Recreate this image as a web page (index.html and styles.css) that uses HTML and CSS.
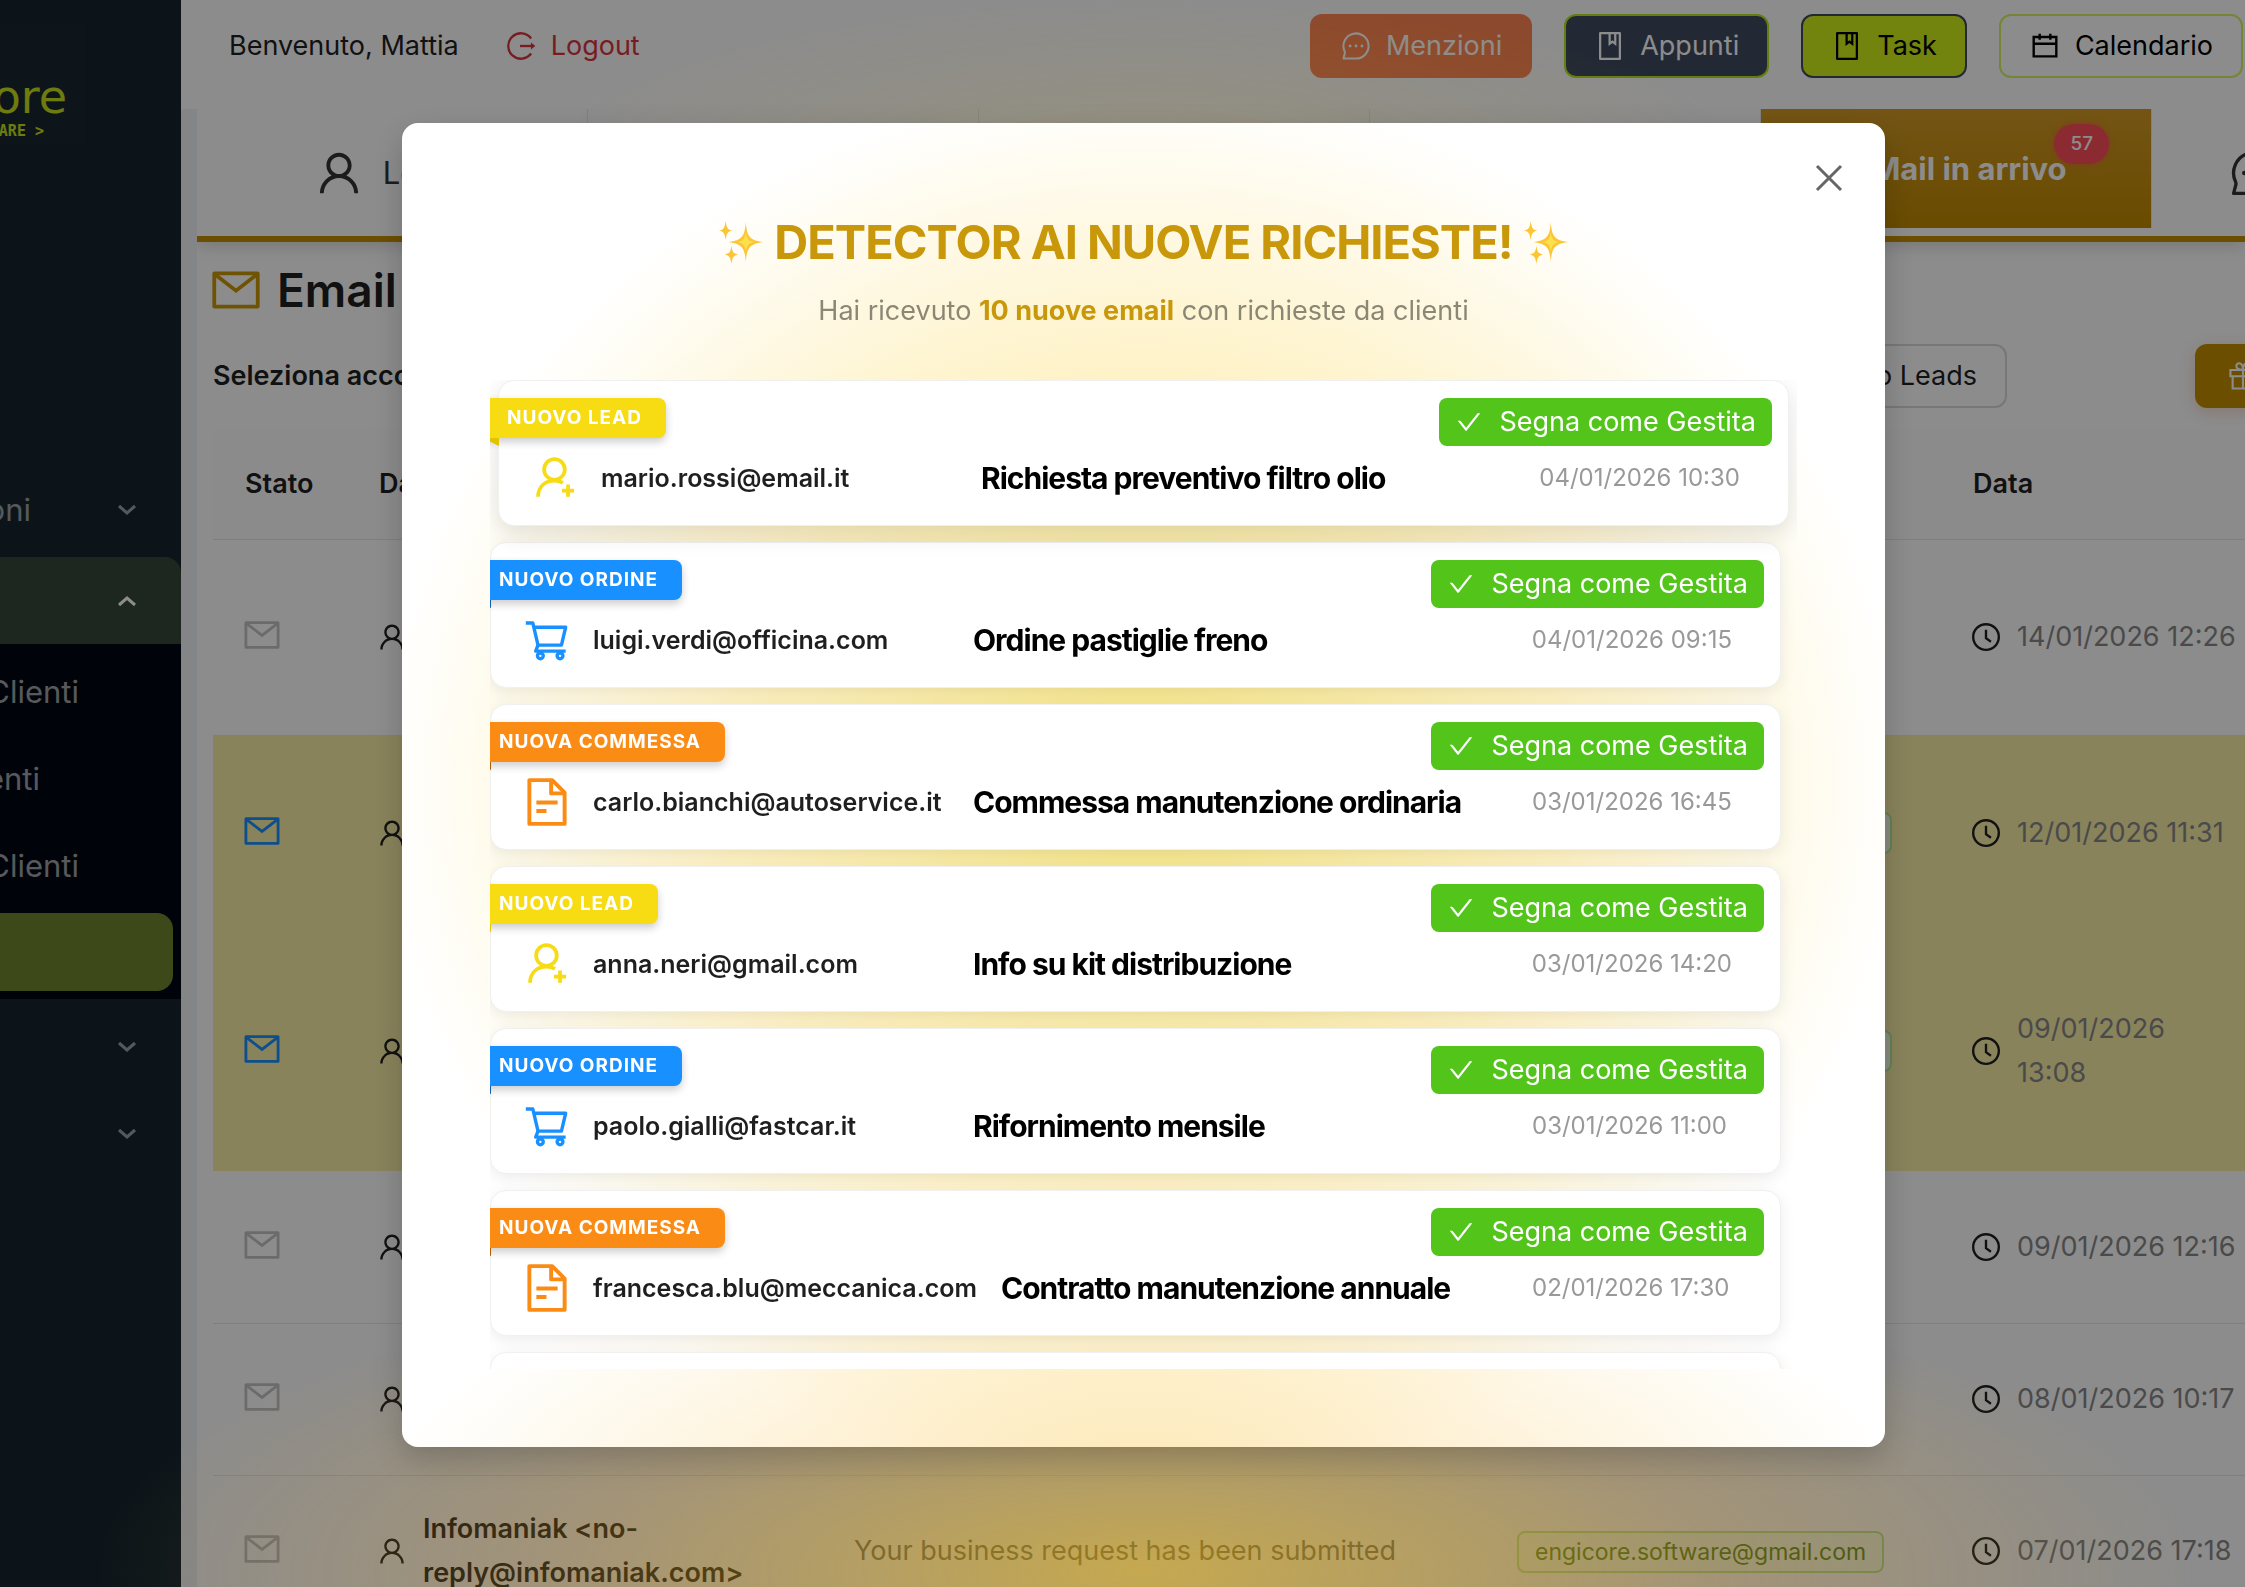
FILE: index.html
```html
<!DOCTYPE html>
<html lang="it">
<head>
    <meta charset="UTF-8">
    <meta name="viewport" content="width=device-width, initial-scale=1.0">
    <title>Engicore - Email</title>
    <link rel="stylesheet" href="styles.css">
</head>
<body>
    <svg class="sprite" aria-hidden="true">
        <symbol id="i-user" viewBox="0 0 1024 1024"><path fill="currentColor" d="M858.500 763.600a374 374 0 0 0-80.600-119.500 375.630 375.630 0 0 0-119.500-80.600c-.4-.2-.8-.3-1.200-.5C719.500 518 760 444.700 760 362c0-137-111-248-248-248S264 225 264 362c0 82.700 40.500 156 102.800 201.100-.4.200-.8.300-1.200.5-44.800 18.900-85 46-119.500 80.600a375.630 375.630 0 0 0-80.600 119.500A371.700 371.700 0 0 0 136 901.800a8 8 0 0 0 8 8.200h60c4.400 0 7.900-3.500 8-7.800 2-77.200 33-149.500 87.800-204.300 56.700-56.700 132-87.900 212.200-87.900s155.500 31.200 212.200 87.900C779 752.700 810 825 812 902.200c.1 4.400 3.600 7.800 8 7.800h60a8 8 0 0 0 8-8.200c-1-47.800-10.900-94.300-29.500-138.200zM512 534c-45.900 0-89.100-17.900-121.600-50.400S340 407.900 340 362c0-45.900 17.900-89.100 50.400-121.600S466.100 190 512 190s89.100 17.900 121.600 50.400S684 316.100 684 362c0 45.900-17.900 89.100-50.400 121.600S557.900 534 512 534z"/></symbol>
        <symbol id="i-mail" viewBox="0 0 1024 1024"><g fill="none" stroke="currentColor" stroke-width="72"><rect x="100" y="196" width="824" height="632" rx="4"/><path d="M128 228l384 296 384-296"/></g></symbol>
        <symbol id="i-clock" viewBox="0 0 1024 1024"><g fill="none" stroke="currentColor" stroke-width="76"><circle cx="512" cy="512" r="410"/><path d="M512 280v270l158 112"/></g></symbol>
        <symbol id="i-check" viewBox="0 0 1024 1024"><path fill="currentColor" d="M912 190h-69.900c-9.800 0-19.100 4.500-25.100 12.200L404.700 724.500 207 474a32 32 0 0 0-25.100-12.200H112c-6.700 0-10.400 7.700-6.300 12.900l273.900 347c12.800 16.200 37.400 16.200 50.300 0l488.400-618.900c4.100-5.100.4-12.800-6.300-12.800z"/></symbol>
        <symbol id="i-logout" viewBox="0 0 1024 1024"><g fill="none" stroke="currentColor" stroke-width="76"><path d="M836 270A406 406 0 1 0 836 754"/><path d="M480 512h360"/></g><path fill="currentColor" d="M830 400l140 112-140 112z"/></symbol>
        <symbol id="i-message" viewBox="0 0 1024 1024"><path fill="none" stroke="currentColor" stroke-width="66" stroke-linejoin="round" d="M110 914h402a402 402 0 1 0-364-232c12 26 14 48 2 80z"/><g fill="currentColor"><circle cx="322" cy="512" r="46"/><circle cx="512" cy="512" r="46"/><circle cx="702" cy="512" r="46"/></g></symbol>
        <symbol id="i-book" viewBox="0 0 1024 1024"><g fill="none" stroke="currentColor" stroke-width="72"><rect x="196" y="100" width="632" height="824" rx="4"/><path d="M500 110v330l90-70 90 70V110"/></g></symbol>
        <symbol id="i-calendar" viewBox="0 0 1024 1024"><path fill="none" stroke="currentColor" stroke-width="76" d="M150 222h724v620H150zM150 440h724M342 120v190M682 120v190"/></symbol>
        <symbol id="i-gift" viewBox="0 0 1024 1024"><g fill="none" stroke="currentColor" stroke-width="68"><path d="M110 320h804v200H110zM180 520h664v390H180zM512 320v590"/><path d="M512 310C400 310 300 280 300 190c0-60 50-90 95-85 80 10 117 100 117 205zM512 310c112 0 212-30 212-120 0-60-50-90-95-85-80 10-117 100-117 205z"/></g></symbol>
        <symbol id="i-user-add" viewBox="0 0 1024 1024"><g fill="none" stroke="currentColor" stroke-width="80"><circle cx="500" cy="330" r="220"/><path d="M150 910c0-210 150-340 350-340 75 0 130 15 180 45"/><path d="M790 650v260M660 780h260"/></g></symbol>
        <symbol id="i-cart" viewBox="0 0 1024 1024"><g fill="none" stroke="currentColor" stroke-width="72" stroke-linejoin="round"><path d="M60 150h150l110 470h500l90-380H240"/><path d="M320 620l-50 130h640"/><circle cx="370" cy="850" r="62"/><circle cx="790" cy="850" r="62"/></g></symbol>
        <symbol id="i-file" viewBox="60 60 904 904"><g fill="none" stroke="currentColor" stroke-width="74" stroke-linejoin="round"><path d="M180 100h430l234 234v590H180z"/><path d="M590 110v240h240M312 520h400M312 680h190"/></g></symbol>
        <symbol id="i-down" viewBox="0 0 20 20"><path fill="none" stroke="currentColor" stroke-width="3" d="M2 6l8 7 8-7"/></symbol>
        <symbol id="i-up" viewBox="0 0 20 20"><path fill="none" stroke="currentColor" stroke-width="3" d="M2 14l8-7 8 7"/></symbol>
        <symbol id="i-close" viewBox="0 0 28 28"><path fill="none" stroke="currentColor" stroke-width="3" d="M2 2l24 24M26 2L2 26"/></symbol>
        <symbol id="i-sparkles" viewBox="0 0 48 48"><path fill="#fcc534" d="M29 3c1 15 4 19 18 21-14 2-17 6-18 21-1-15-4-19-18-21 14-2 17-6 18-21z"/><path fill="#fde04e" d="M29 14c1 7 3 9 9 10-6 1-8 3-9 10-1-7-3-9-9-10 6-1 8-3 9-10z"/><path fill="#fcc534" d="M8 2c1 7 2 9 7 10-5 1-6 3-7 10-1-7-2-9-7-10 5-1 6-3 7-10zM14 28c1 7 2 8 7 9-5 1-6 3-7 10-1-7-2-9-7-10 5-1 6-2 7-9z"/></symbol>
    </svg>

    <div class="layout">
        <aside class="sidebar">
            <div class="logo">
                <span class="logo-name">core</span>
                <span class="logo-tag">SOFTWARE &gt;</span>
            </div>
            <nav class="menu">
                <a href="#" class="menu-item"><span class="label">Comunicazioni</span><svg><use href="#i-down"/></svg></a>
                <a href="#" class="menu-item open" aria-label="Clienti"><svg><use href="#i-up"/></svg></a>
                <div class="submenu">
                    <a href="#" class="submenu-item">Clienti</a>
                    <a href="#" class="submenu-item short">Clienti</a>
                    <a href="#" class="submenu-item">Clienti</a>
                    <a href="#" class="submenu-item active" aria-label="Email"></a>
                </div>
                <a href="#" class="menu-item" aria-label="Magazzino"><svg><use href="#i-down"/></svg></a>
                <a href="#" class="menu-item" aria-label="Impostazioni"><svg><use href="#i-down"/></svg></a>
            </nav>
        </aside>

        <div class="main">
            <header class="header">
                <span class="welcome">Benvenuto, Mattia</span>
                <a href="#" class="logout"><svg><use href="#i-logout"/></svg>Logout</a>
                <div class="actions">
                    <button class="btn mentions"><svg><use href="#i-message"/></svg>Menzioni</button>
                    <button class="btn notes"><svg><use href="#i-book"/></svg>Appunti</button>
                    <button class="btn task"><svg><use href="#i-book"/></svg>Task</button>
                    <button class="btn calendar"><svg><use href="#i-calendar"/></svg>Calendario</button>
                </div>
            </header>

            <div class="content">
                <div class="tabs">
                    <button class="tab"><svg><use href="#i-user"/></svg>Leads</button>
                    <button class="tab"></button>
                    <button class="tab"></button>
                    <button class="tab"></button>
                    <button class="tab active">Mail in arrivo<span class="count">57</span></button>
                    <button class="tab last"><svg><use href="#i-message"/></svg></button>
                </div>

                <section class="panel">
                    <h1 class="page-title"><svg><use href="#i-mail"/></svg>Email</h1>
                    <div class="toolbar">
                        <span class="toolbar-label">Seleziona account:</span>
                        <button class="btn leads">Solo Leads</button>
                        <button class="btn gift" aria-label="Novità"><svg><use href="#i-gift"/></svg></button>
                    </div>

                    <table class="mails">
                        <colgroup>
                            <col class="col-state"><col class="col-from"><col class="col-subject"><col class="col-account"><col class="col-date">
                        </colgroup>
                        <thead>
                            <tr><th>Stato</th><th>Da</th><th></th><th></th><th>Data</th></tr>
                        </thead>
                        <tbody>
                            <tr class="tall">
                                <td><svg class="mail"><use href="#i-mail"/></svg></td>
                                <td><svg class="person"><use href="#i-user"/></svg></td>
                                <td></td><td></td>
                                <td><div class="date"><svg><use href="#i-clock"/></svg><span>14/01/2026 12:26</span></div></td>
                            </tr>
                            <tr class="tall unread">
                                <td><svg class="mail"><use href="#i-mail"/></svg></td>
                                <td><svg class="person"><use href="#i-user"/></svg></td>
                                <td></td><td><span class="tag wide"></span></td>
                                <td><div class="date"><svg><use href="#i-clock"/></svg><span>12/01/2026 11:31</span></div></td>
                            </tr>
                            <tr class="taller unread">
                                <td><svg class="mail"><use href="#i-mail"/></svg></td>
                                <td><svg class="person"><use href="#i-user"/></svg></td>
                                <td></td><td><span class="tag wide"></span></td>
                                <td><div class="date"><svg><use href="#i-clock"/></svg><span>09/01/2026<br>13:08</span></div></td>
                            </tr>
                            <tr>
                                <td><svg class="mail"><use href="#i-mail"/></svg></td>
                                <td><svg class="person"><use href="#i-user"/></svg></td>
                                <td></td><td></td>
                                <td><div class="date"><svg><use href="#i-clock"/></svg><span>09/01/2026 12:16</span></div></td>
                            </tr>
                            <tr>
                                <td><svg class="mail"><use href="#i-mail"/></svg></td>
                                <td><svg class="person"><use href="#i-user"/></svg></td>
                                <td></td><td></td>
                                <td><div class="date"><svg><use href="#i-clock"/></svg><span>08/01/2026 10:17</span></div></td>
                            </tr>
                            <tr>
                                <td><svg class="mail"><use href="#i-mail"/></svg></td>
                                <td><div class="from"><svg class="person"><use href="#i-user"/></svg><strong>Infomaniak &lt;no-<br>reply@infomaniak.com&gt;</strong></div></td>
                                <td class="subject-cell">Your business request has been submitted</td>
                                <td><span class="tag">engicore.software@gmail.com</span></td>
                                <td><div class="date"><svg><use href="#i-clock"/></svg><span>07/01/2026 17:18</span></div></td>
                            </tr>
                        </tbody>
                    </table>
                </section>
            </div>
        </div>
    </div>

    <div class="mask">
        <div class="modal" role="dialog" aria-labelledby="modalTitle">
            <button class="close" aria-label="Chiudi"><svg><use href="#i-close"/></svg></button>
            <h2 class="modal-title" id="modalTitle"><svg><use href="#i-sparkles"/></svg>DETECTOR AI NUOVE RICHIESTE!<svg><use href="#i-sparkles"/></svg></h2>
            <p class="modal-text">Hai ricevuto <strong>10 nuove email</strong> con richieste da clienti</p>

            <div class="requests">
                <article class="request lead hover">
                    <div class="request-top"><span class="ribbon">NUOVO LEAD</span><button class="done"><svg><use href="#i-check"/></svg>Segna come Gestita</button></div>
                    <div class="request-body"><svg><use href="#i-user-add"/></svg><span class="email">mario.rossi@email.it</span><h3>Richiesta preventivo filtro olio</h3><time>04/01/2026 10:30</time></div>
                </article>
                <article class="request order">
                    <div class="request-top"><span class="ribbon">NUOVO ORDINE</span><button class="done"><svg><use href="#i-check"/></svg>Segna come Gestita</button></div>
                    <div class="request-body"><svg><use href="#i-cart"/></svg><span class="email">luigi.verdi@officina.com</span><h3>Ordine pastiglie freno</h3><time>04/01/2026 09:15</time></div>
                </article>
                <article class="request job">
                    <div class="request-top"><span class="ribbon">NUOVA COMMESSA</span><button class="done"><svg><use href="#i-check"/></svg>Segna come Gestita</button></div>
                    <div class="request-body"><svg><use href="#i-file"/></svg><span class="email">carlo.bianchi@autoservice.it</span><h3>Commessa manutenzione ordinaria</h3><time>03/01/2026 16:45</time></div>
                </article>
                <article class="request lead">
                    <div class="request-top"><span class="ribbon">NUOVO LEAD</span><button class="done"><svg><use href="#i-check"/></svg>Segna come Gestita</button></div>
                    <div class="request-body"><svg><use href="#i-user-add"/></svg><span class="email">anna.neri@gmail.com</span><h3>Info su kit distribuzione</h3><time>03/01/2026 14:20</time></div>
                </article>
                <article class="request order">
                    <div class="request-top"><span class="ribbon">NUOVO ORDINE</span><button class="done"><svg><use href="#i-check"/></svg>Segna come Gestita</button></div>
                    <div class="request-body"><svg><use href="#i-cart"/></svg><span class="email">paolo.gialli@fastcar.it</span><h3>Rifornimento mensile</h3><time>03/01/2026 11:00</time></div>
                </article>
                <article class="request job">
                    <div class="request-top"><span class="ribbon">NUOVA COMMESSA</span><button class="done"><svg><use href="#i-check"/></svg>Segna come Gestita</button></div>
                    <div class="request-body"><svg><use href="#i-file"/></svg><span class="email">francesca.blu@meccanica.com</span><h3>Contratto manutenzione annuale</h3><time>02/01/2026 17:30</time></div>
                </article>
                <article class="request"></article>
            </div>
        </div>
    </div>
</body>
</html>
```

FILE: styles.css
```css
:root {
    --gold: #c9980a;
    --lead: #f7dc14;
    --order: #1890ff;
    --job: #fa8c16;
    --green: #52c41a;
    --text: #1f1f1f;
    --font-family: Inter, 'Liberation Sans', sans-serif;
}

* {
    margin: 0;
    padding: 0;
    box-sizing: border-box;
}

body {
    font-family: var(--font-family);
    font-size: 27px;
    line-height: 44px;
    color: var(--text);
    height: 100vh;
    overflow: hidden;
}

button {
    font: inherit;
    color: inherit;
    border: none;
    background: none;
    cursor: pointer;
}

a {
    text-decoration: none;
}

svg {
    display: block;
    flex: none;
}

.sprite {
    position: absolute;
    width: 0;
    height: 0;
}

.layout {
    display: flex;
    height: 100vh;
    overflow: hidden;
}

/* Sidebar */
.sidebar {
    flex: none;
    width: 181px;
    background: #16262f;
    overflow: hidden;
}

.logo {
    display: flex;
    flex-direction: column;
    align-items: flex-end;
    width: 86px;
    height: 120px;
    margin: 23px 0 323px;
    padding: 50px 19px 0 0;
    background: #1a2731;
    color: #c6e01c;
}

.logo-name {
    font-family: 'DejaVu Sans', sans-serif;
    font-size: 46px;
    font-weight: 400;
    line-height: 48px;
}

.logo-tag {
    margin-right: 23px;
    font-family: 'DejaVu Sans Mono', monospace;
    font-size: 15px;
    font-weight: 700;
    line-height: 20px;
    white-space: nowrap;
}

.menu-item {
    display: flex;
    align-items: center;
    justify-content: flex-end;
    height: 87px;
    padding-right: 44px;
    font-size: 31px;
    color: #9aa3a8;
}

.menu-item svg {
    width: 20px;
    height: 20px;
}

.menu-item .label {
    margin-right: 86px;
}

.menu-item.open {
    margin-top: 4px;
    background: #35453a;
    border-radius: 0 16px 0 0;
    color: #fff;
}

.submenu {
    margin-bottom: 4px;
    padding: 4px 0 8px;
    background: #000713;
}

.submenu-item {
    display: flex;
    align-items: center;
    justify-content: flex-end;
    height: 87px;
    padding-right: 102px;
    font-size: 31px;
    color: #a0a3a8;
}

.submenu-item.short {
    padding-right: 141px;
}

.submenu-item.active {
    height: 78px;
    margin: 4px 8px 0 0;
    background: #71852f;
    border-radius: 0 16px 16px 0;
}

/* Header */
.main {
    flex: 1;
    min-width: 0;
    background: #f0f2f5;
}

.header {
    display: flex;
    align-items: center;
    height: 109px;
    padding: 0 2px 17px 48px;
    background: #fff;
}

.logout {
    display: flex;
    align-items: center;
    gap: 14px;
    margin-left: 46px;
    color: #d9363e;
}

.logout svg,
.btn svg {
    width: 32px;
    height: 32px;
}

.actions {
    display: flex;
    gap: 32px;
    margin-left: auto;
}

.btn {
    display: flex;
    align-items: center;
    gap: 14px;
    height: 64px;
    padding: 0 28px;
    border: 2px solid transparent;
    border-radius: 12px;
}

.mentions {
    background: #ff8552;
    color: #fff;
}

.notes {
    background: #3e4b60;
    border-color: #b5e61d;
    color: #fff;
}

.task {
    background: #d0ee1a;
    border-color: #3e4b60;
    color: #000;
}

.calendar {
    border-color: #d3f261;
    color: #000;
}

/* Tabs */
.content {
    margin-left: 16px;
    overflow: hidden;
}

.tabs {
    display: flex;
    height: 133px;
    background: #fff;
    border-bottom: 6px solid #c48f00;
    box-shadow: 0 4px 16px rgba(0, 0, 0, 0.15);
    position: relative;
}

.tab {
    position: relative;
    display: flex;
    align-items: center;
    justify-content: center;
    gap: 18px;
    flex: 0 0 391px;
    border-right: 1px solid #ebebeb;
    font-size: 31px;
    color: #333;
}

.tab svg {
    width: 52px;
    height: 52px;
}

.tab.active {
    height: 119px;
    padding-left: 26px;
    background: linear-gradient(#d29a26, #c08a00);
    color: #fff;
    font-weight: 700;
}

.tab.last {
    justify-content: flex-start;
    padding-left: 76px;
}

.count {
    position: absolute;
    top: 15px;
    right: 42px;
    padding: 0 16px;
    background: #ff4d5a;
    border-radius: 20px;
    box-shadow: 0 0 6px rgba(255, 77, 79, 0.6);
    font-size: 19px;
    font-weight: 500;
    line-height: 40px;
}

/* Mail panel */
.panel {
    padding: 16px 0 0 16px;
    background: #fff;
}

.page-title {
    display: flex;
    align-items: center;
    gap: 14px;
    font-size: 46px;
    font-weight: 600;
    line-height: 64px;
}

.page-title svg {
    width: 54px;
    height: 54px;
    margin-left: -4px;
    color: #c9980a;
}

.toolbar {
    display: flex;
    align-items: center;
    height: 64px;
    margin: 22px 0 21px;
}

.toolbar-label {
    margin-right: auto;
    font-weight: 600;
}

.leads {
    margin-right: 188px;
    border-color: #d9d9d9;
}

.gift {
    width: 112px;
    margin-right: -62px;
    padding-left: 30px;
    background: #c48f00;
    box-shadow: 0 4px 16px rgba(196, 60, 0, 0.2);
    color: #fff;
}

.mails {
    width: calc(100% + 40px);
    table-layout: fixed;
    border-collapse: collapse;
}

.col-state { width: 134px; }
.col-from { width: 475px; }
.col-subject { width: 663px; }
.col-account { width: 456px; }

.mails th {
    height: 110px;
    padding: 0 32px;
    background: #fdfdfd;
    border-bottom: 1px solid #e8e8e8;
    font-weight: 600;
    text-align: left;
}

.mails td {
    height: 152px;
    padding: 0 32px;
    border-bottom: 1px solid #e8e8e8;
    vertical-align: middle;
    white-space: nowrap;
}

.mails .tall td { height: 196px; }
.mails .taller td { height: 240px; }

.mails .unread td {
    background: #f9eea7;
    border-bottom: none;
}

.mail {
    width: 40px;
    height: 40px;
    margin: 0 0 4px -3px;
    color: #c4c4c4;
}

.unread .mail {
    color: #1890ff;
}

.person,
.date svg {
    width: 32px;
    height: 32px;
    margin-left: -3px;
}

.from,
.date {
    display: flex;
    align-items: center;
    gap: 15px;
}

.from strong {
    font-weight: 600;
}

.date span {
    color: #888;
}

.subject-cell {
    color: #666;
}

.tag {
    display: inline-block;
    padding: 0 16px;
    background: #f6ffed;
    border: 2px solid #b7eb8f;
    border-radius: 8px;
    color: #5b8c1a;
    font-size: 23px;
    line-height: 38px;
}

.tag.wide {
    display: block;
    width: 375px;
    height: 42px;
}

/* Modal */
.mask {
    position: fixed;
    inset: 0;
    display: flex;
    align-items: flex-start;
    justify-content: center;
    padding: 123px 0 0 42px;
    background:
        radial-gradient(1050px 320px at 51% 99%, rgba(255, 197, 20, 0.5), rgba(255, 180, 40, 0.2) 55%, transparent),
        radial-gradient(600px 160px at 51% 10%, rgba(200, 170, 60, 0.16), transparent),
        rgba(0, 0, 0, 0.45);
}

.modal {
    position: relative;
    width: 68%;
    max-width: 1483px;
    padding: 87px 88px 78px;
    background:
        radial-gradient(760px 700px at 50% 50%, rgba(240, 216, 70, 0.65), rgba(252, 224, 120, 0.45) 55%, transparent),
        radial-gradient(760px 260px at 50% 104%, rgba(252, 214, 130, 0.6), transparent),
        #fff;
    border-radius: 16px;
    box-shadow: 0 12px 32px rgba(0, 0, 0, 0.2);
}

.close {
    position: absolute;
    top: 41px;
    right: 42px;
    color: #666;
}

.close svg {
    width: 28px;
    height: 28px;
}

.modal-title {
    display: flex;
    align-items: center;
    justify-content: center;
    gap: 10px;
    color: var(--gold);
    font-size: 47px;
    font-weight: 700;
    letter-spacing: -1px;
    line-height: 64px;
}

.modal-title svg {
    width: 46px;
    height: 46px;
}

.modal-text {
    margin: 15px 0 47px;
    color: #8c8775;
    text-align: center;
}

.modal-text strong {
    color: var(--gold);
    font-weight: 700;
}

.requests {
    display: flex;
    flex-direction: column;
    gap: 16px;
    height: 989px;
    padding-right: 16px;
    overflow: hidden;
}

.request {
    flex: none;
    min-height: 146px;
    padding: 17px 16px 23px;
    background: #fff;
    border: 1px solid #f0f0f0;
    border-radius: 16px;
    box-shadow: 0 4px 16px rgba(0, 0, 0, 0.08);
}

.request.hover {
    position: relative;
    left: 8px;
    box-shadow: 0 8px 24px rgba(0, 0, 0, 0.12);
}

.lead { --accent: var(--lead); --fold: #e0c400; }
.order { --accent: var(--order); --fold: #0b5cad; }
.job { --accent: var(--job); --fold: #b35c00; }

.request-top {
    display: flex;
    align-items: flex-start;
    justify-content: space-between;
}

.ribbon {
    position: relative;
    margin-left: -32px;
    padding: 0 24px;
    background: var(--accent);
    border-radius: 0 8px 8px 0;
    box-shadow: 0 4px 8px rgba(0, 0, 0, 0.2);
    color: #fff;
    font-size: 19px;
    font-weight: 700;
    letter-spacing: 1px;
    line-height: 40px;
}

.ribbon::after {
    content: '';
    position: absolute;
    left: 0;
    top: 100%;
    border-top: 8px solid var(--fold);
    border-left: 16px solid transparent;
}

.done {
    display: flex;
    align-items: center;
    gap: 16px;
    height: 48px;
    padding: 0 16px;
    background: var(--green);
    border-radius: 8px;
    color: #fff;
}

.done svg {
    width: 28px;
    height: 28px;
}

.request-body {
    display: flex;
    align-items: center;
    margin-top: 8px;
    padding: 0 32px 0 16px;
}

.request-body svg {
    width: 48px;
    height: 48px;
    margin-right: 22px;
    color: var(--accent);
}

.email {
    min-width: 356px;
    margin-right: 24px;
    font-size: 25px;
    font-weight: 600;
}

.request-body h3 {
    flex: 1;
    color: #000;
    font-size: 30px;
    font-weight: 700;
    letter-spacing: -1px;
    white-space: nowrap;
}

.request-body time {
    min-width: 200px;
    color: #999;
    font-size: 24px;
}
```
